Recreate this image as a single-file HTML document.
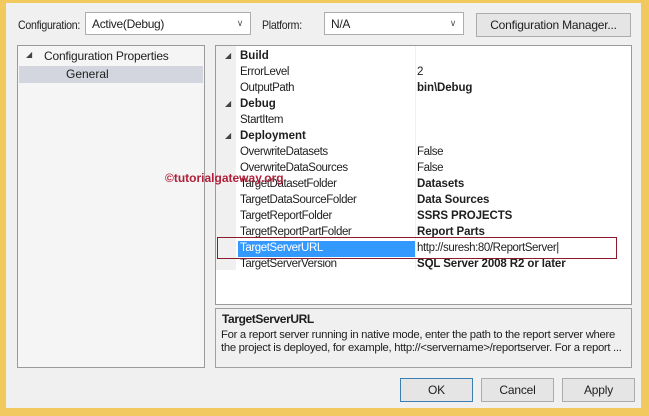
<!DOCTYPE html>
<html><head><style>
*{box-sizing:border-box;margin:0;padding:0}
body{width:649px;height:416px;background:#f2c95f;position:relative;overflow:hidden;font-family:"Liberation Sans",sans-serif;font-size:12px;color:#1e1e1e}
#in{position:absolute;left:6px;top:3px;width:635px;height:405px;background:#f0f0f0}
.a{position:absolute;white-space:nowrap}
.lbl{font-size:12px;letter-spacing:-0.3px;transform:scaleX(0.88);transform-origin:left}
.combo{position:absolute;background:#fff;border:1px solid #adadad;height:23px;padding:4px 6px;font-size:12px;letter-spacing:-0.3px}
.combo span{position:absolute;right:7px;top:5px;font-size:9px;color:#555}
.btn{position:absolute;background:#e5e5e5;border:1px solid #acacac;text-align:center;font-size:12px;line-height:22px;letter-spacing:-0.2px}
.row{position:absolute;left:0;width:416px;height:16px;font-size:11.5px;line-height:16px;letter-spacing:-0.4px}
.row .n{position:absolute;left:24px}
.row .v{position:absolute;left:201px}
.b{font-weight:bold;letter-spacing:-0.1px}
.cat .n{left:24px;font-weight:bold;letter-spacing:0}
.cat .t{position:absolute;left:9px;font-size:8px;color:#444}
</style></head><body>
<div id="in"></div>
<div class="a lbl" style="left:18px;top:18px">Configuration:</div>
<div class="combo" style="left:85px;top:12px;width:166px">Active(Debug)<span>&#8744;</span></div>
<div class="a lbl" style="left:262px;top:18px">Platform:</div>
<div class="combo" style="left:324px;top:12px;width:140px">N/A<span>&#8744;</span></div>
<div class="btn" style="left:476px;top:13px;width:155px;height:24px">Configuration Manager...</div>

<div class="a" style="left:17px;top:45px;width:188px;height:323px;background:#f5f5f5;border:1px solid #9a9a9a">
 <div class="a" style="left:8px;top:4px;font-size:8px;color:#444">&#9698;</div>
 <div class="a" style="left:26px;top:3px;font-size:12px;letter-spacing:-0.2px">Configuration Properties</div>
 <div class="a" style="left:1px;top:20px;width:184px;height:17px;background:#d3d6de"></div>
 <div class="a" style="left:48px;top:21px;font-size:12px">General</div>
</div>

<div class="a" style="left:215px;top:45px;width:417px;height:260px;background:#fff;border:1px solid #9a9a9a">
 <div class="a" style="left:0;top:0;width:20px;height:224px;background:#f0f0f0"></div>
 <div class="row cat" style="top:2px"><span class="t">&#9698;</span><span class="n">Build</span></div>
 <div class="row" style="top:18px"><span class="n">ErrorLevel</span><span class="v">2</span></div>
 <div class="row" style="top:34px"><span class="n">OutputPath</span><span class="v b">bin\Debug</span></div>
 <div class="row cat" style="top:50px"><span class="t">&#9698;</span><span class="n">Debug</span></div>
 <div class="row" style="top:66px"><span class="n">StartItem</span></div>
 <div class="row cat" style="top:82px"><span class="t">&#9698;</span><span class="n">Deployment</span></div>
 <div class="row" style="top:98px"><span class="n">OverwriteDatasets</span><span class="v">False</span></div>
 <div class="row" style="top:114px"><span class="n">OverwriteDataSources</span><span class="v">False</span></div>
 <div class="row" style="top:130px"><span class="n">TargetDatasetFolder</span><span class="v b">Datasets</span></div>
 <div class="row" style="top:146px"><span class="n">TargetDataSourceFolder</span><span class="v b">Data Sources</span></div>
 <div class="row" style="top:162px"><span class="n">TargetReportFolder</span><span class="v b">SSRS PROJECTS</span></div>
 <div class="row" style="top:178px"><span class="n">TargetReportPartFolder</span><span class="v b">Report Parts</span></div>
 <div class="a" style="left:22px;top:195px;width:177px;height:16px;background:#3399ff"></div>
 <div class="row" style="top:194px;color:#fff"><span class="n">TargetServerURL</span><span class="v" style="color:#1e1e1e">http://suresh:80/ReportServer|</span></div>
 <div class="row" style="top:210px"><span class="n">TargetServerVersion</span><span class="v b">SQL Server 2008 R2 or later</span></div>
 <div class="a" style="left:199px;top:0;width:1px;height:224px;background:#f0f0f0"></div>
</div>
<div class="a" style="left:217px;top:237px;width:400px;height:22px;border:1px solid #8b1a2a"></div>
<div class="a" style="left:165px;top:171px;font-size:12px;font-weight:bold;color:#b0203a">©tutorialgateway.org</div>

<div class="a" style="left:215px;top:308px;width:417px;height:60px;background:#f0f0f0;border:1px solid #a0a0a0">
 <div class="a" style="left:6px;top:3px;font-weight:bold;font-size:12px;letter-spacing:-0.4px">TargetServerURL</div>
 <div class="a" style="left:5px;top:20px;font-size:11.3px;line-height:13px;letter-spacing:-0.3px">For a report server running in native mode, enter the path to the report server where<br>the project is deployed, for example, http://&lt;servername&gt;/reportserver. For a report ...</div>
</div>

<div class="btn" style="left:400px;top:378px;width:73px;height:24px;border-color:#3c7fb1">OK</div>
<div class="btn" style="left:481px;top:378px;width:73px;height:24px">Cancel</div>
<div class="btn" style="left:562px;top:378px;width:73px;height:24px">Apply</div>
</body></html>
